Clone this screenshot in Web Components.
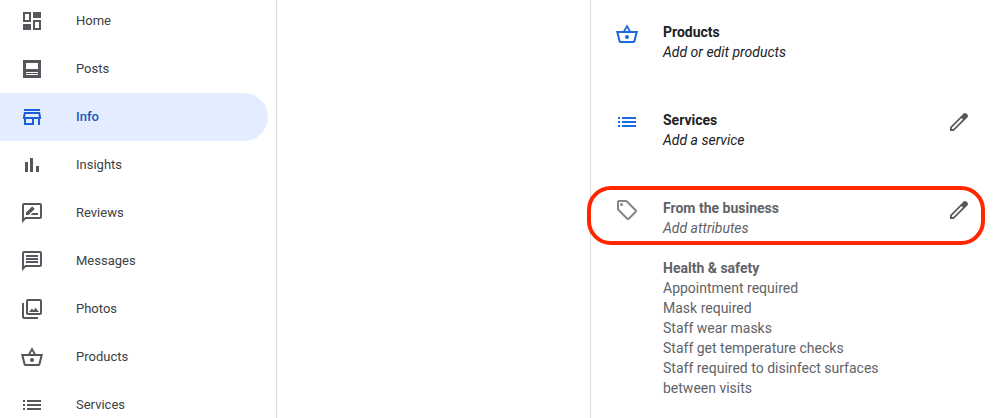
<!DOCTYPE html>
<html lang="en">
<head>
<meta charset="utf-8">
<title>Business info</title>
<style>
  html, body { margin: 0; height: 100%; }
  body { background: #fff; font-family: Roboto, "Liberation Sans", sans-serif; overflow: hidden; }
</style>
</head>
<body>
<business-page></business-page>
<script>
const ICONS = {
  home: '<path fill-rule="evenodd" d="M3 3h8v10H3zM5 5v6h4V5zM13 3h8v6h-8zM3 15h8v6H3zM13 11h8v10h-8zM15 13v6h4v-6z"/>',
  posts: '<path fill-rule="evenodd" d="M3 3h18v18H3zM6 6v6h12V6zM6 15v1h12v-1zM6 17v1h12v-1z"/>',
  info: '<path d="M18.36 9l.6 3H5.04l.6-3h12.72M20 4H4v2h16V4zm0 3H4l-1 5v2h1v6h10v-6h4v6h2v-6h1v-2l-1-5zM6 18v-4h6v4H6z"/>',
  insights: '<path d="M5 9h3v10H5zM10 5h3v14h-3zM16 13h3v6h-3z"/>',
  reviews: '<path d="M20 2H4c-1.1 0-1.99.9-1.99 2L2 22l4-4h14c1.1 0 2-.9 2-2V4c0-1.1-.9-2-2-2zm0 14H5.17L4 17.17V4h16v12zM10.5 14H18v-2h-5.5zM14.36 8.13c.2-.2.2-.51 0-.71l-1.77-1.77c-.2-.2-.51-.2-.71 0L6 11.53V14h2.47l5.89-5.87z"/>',
  messages: '<path d="M4 4h16v12H5.17L4 17.17V4m0-2c-1.1 0-1.99.9-1.99 2L2 22l4-4h14c1.1 0 2-.9 2-2V4c0-1.1-.9-2-2-2H4zm2 10h12v2H6v-2zm0-3h12v2H6V9zm0-3h12v2H6V6z"/>',
  photos: '<path d="M20 4v12H8V4h12m0-2H8c-1.1 0-2 .9-2 2v12c0 1.1.9 2 2 2h12c1.1 0 2-.9 2-2V4c0-1.1-.9-2-2-2zM12 11.5l1.5 2 2-2.7L19 15H9zM2 6v14c0 1.1.9 2 2 2h14v-2H4V6H2z"/>',
  products: '<path fill-rule="evenodd" d="M12 2.3 8.2 9H1l2.6 10.6c.2.8.9 1.4 1.8 1.4h13.2c.9 0 1.6-.6 1.8-1.4L23 9h-7.2zM12 6l1.7 3h-3.4zM3.6 11h16.8l-2 8H5.6z"/><circle cx="12" cy="15" r="2"/>',
  list: '<path d="M3 7h2v2H3zM3 11h2v2H3zM3 15h2v2H3zM7 7h14v2H7zM7 11h14v2H7zM7 15h14v2H7z"/>',
  tag: '<path d="M21.41 11.58l-9-9C12.05 2.22 11.55 2 11 2H4c-1.1 0-2 .9-2 2v7c0 .55.22 1.05.59 1.42l9 9c.36.36.86.58 1.41.58s1.05-.22 1.41-.59l7-7c.37-.36.59-.86.59-1.41s-.23-1.06-.59-1.42zM13 20.01L4 11V4h7v-.01l9 9-7 7.02z"/><circle cx="6.5" cy="6.5" r="1.5"/>',
  edit: '<path fill-rule="evenodd" d="M20.4 4.6 19.4 3.6c-.8-.8-2-.8-2.8 0L3 17.2V21h3.8L20.4 7.4c.8-.8.8-2 0-2.8zM6.2 19.2H4.8v-1.4L14.5 8.1l1.4 1.4z"/>'
};

const define = (name, html, setup) => {
  const template = document.createElement('template');
  template.innerHTML = html;
  customElements.define(name, class extends HTMLElement {
    constructor() {
      super();
      this.attachShadow({ mode: 'open' }).append(template.content.cloneNode(true));
    }
    connectedCallback() { if (setup) setup(this, this.shadowRoot); }
  });
};

define('ui-icon', `
  <style>
    :host { display: block; width: 24px; height: 24px; flex: none; }
    svg { display: block; width: 100%; height: 100%; fill: currentColor; }
  </style>
  <svg viewBox="0 0 24 24" aria-hidden="true"></svg>`,
  (el, root) => { root.querySelector('svg').innerHTML = ICONS[el.getAttribute('name')]; });

define('nav-item', `
  <style>
    :host { display: block; color: #3c4043; --icon: #54575c; }
    :host([active]) { color: #185abc; --icon: #1a5fd6; font-weight: 500; }
    a { display: flex; align-items: center; gap: 32px; height: 48px; padding-left: 20px;
        margin-right: 8px; border-radius: 0 24px 24px 0; color: inherit; text-decoration: none;
        font-size: 13px; line-height: 20px; }
    :host([active]) a { background: #e4edff; }
    .lead { color: var(--icon); }
  </style>
  <a href="#"><span class="lead"></span><span><slot></slot></span></a>`,
  (el, root) => {
    root.querySelector('.lead').innerHTML = `<ui-icon name="${el.getAttribute('icon')}"></ui-icon>`;
    if (el.hasAttribute('active')) root.querySelector('a').setAttribute('aria-current', 'page');
  });

define('side-nav', `
  <style>
    :host { display: block; border-right: 1px solid #dadce0; }
    nav { margin-top: -3px; }
  </style>
  <nav aria-label="Main"><slot></slot></nav>`);

define('info-row', `
  <style>
    :host { display: block; position: relative; color: #202124; --icon: #1a6be0; }
    :host([muted]) { color: #5f6368; --icon: #80868b; }
    .row { display: flex; align-items: flex-start; gap: 24px; padding: 24px; }
    .text { flex: 1; min-width: 0; font-size: 14px; line-height: 20px; }
    h2 { margin: 0; font-size: inherit; font-weight: 700; }
    p { margin: 0; font-style: italic; }
    .lead { color: var(--icon); }
    button { all: unset; display: block; color: #54575c; cursor: pointer; }
    .ring { display: none; }
    :host([highlight]) .ring { display: block; position: absolute; inset: 12px 10px auto -4px;
      height: 59px; box-sizing: border-box; border: 4px solid #ff2600; border-radius: 24px; pointer-events: none; }
  </style>
  <div class="row">
    <span class="lead"></span>
    <div class="text"><h2><slot name="title"></slot></h2><p><slot name="hint"></slot></p><slot></slot></div>
    <button type="button" aria-label="Edit"><ui-icon name="edit"></ui-icon></button>
  </div>
  <div class="ring"></div>`,
  (el, root) => {
    root.querySelector('.lead').innerHTML = `<ui-icon name="${el.getAttribute('icon')}"></ui-icon>`;
    if (!el.hasAttribute('editable')) root.querySelector('button').remove();
  });

define('attribute-list', `
  <style>
    :host { display: block; margin-top: 20px; }
    h3 { margin: 0; font-size: inherit; font-weight: 700; }
  </style>
  <h3><slot name="title"></slot></h3><slot></slot>`);

define('attribute-item', `<style>:host { display: block; }</style><slot></slot>`);

define('info-panel', `
  <style>
    :host { display: block; border-left: 1px solid #dadce0; }
    section { margin-top: -2px; }
  </style>
  <section><slot></slot></section>`);

define('business-page', `
  <style>
    :host { display: grid; grid-template-columns: 277px 1fr 405px; height: 100%; }
  </style>
  <side-nav>
    <nav-item icon="home">Home</nav-item>
    <nav-item icon="posts">Posts</nav-item>
    <nav-item icon="info" active>Info</nav-item>
    <nav-item icon="insights">Insights</nav-item>
    <nav-item icon="reviews">Reviews</nav-item>
    <nav-item icon="messages">Messages</nav-item>
    <nav-item icon="photos">Photos</nav-item>
    <nav-item icon="products">Products</nav-item>
    <nav-item icon="list">Services</nav-item>
  </side-nav>
  <main></main>
  <info-panel>
    <info-row icon="products"><span slot="title">Products</span><span slot="hint">Add or edit products</span></info-row>
    <info-row icon="list" editable><span slot="title">Services</span><span slot="hint">Add a service</span></info-row>
    <info-row icon="tag" editable muted highlight>
      <span slot="title">From the business</span><span slot="hint">Add attributes</span>
      <attribute-list>
        <span slot="title">Health &amp; safety</span>
        <attribute-item>Appointment required</attribute-item>
        <attribute-item>Mask required</attribute-item>
        <attribute-item>Staff wear masks</attribute-item>
        <attribute-item>Staff get temperature checks</attribute-item>
        <attribute-item>Staff required to disinfect surfaces between visits</attribute-item>
      </attribute-list>
    </info-row>
  </info-panel>`);
</script>
</body>
</html>
